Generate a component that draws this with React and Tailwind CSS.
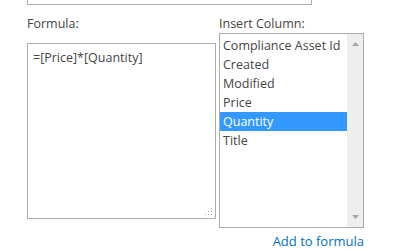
import React from 'react';

const columns = ['Compliance Asset Id', 'Created', 'Modified', 'Price', 'Quantity', 'Title'];

// little dotted resize grip, like the one on a textarea
const Grip = ({ className = '' }) => (
  <svg width="8" height="8" viewBox="0 0 8 8" className={className}>
    <g fill="#a8a8a8">
      <rect x="6" y="0" width="1" height="1" />
      <rect x="3" y="3" width="1" height="1" />
      <rect x="6" y="3" width="1" height="1" />
      <rect x="0" y="6" width="1" height="1" />
      <rect x="3" y="6" width="1" height="1" />
      <rect x="6" y="6" width="1" height="1" />
    </g>
  </svg>
);

const ScrollArrow = ({ down = false }) => (
  <svg width="7" height="4" viewBox="0 0 7 4">
    <path d={down ? 'M0 0H7L3.5 4Z' : 'M0 4H7L3.5 0Z'} fill="#a6a6a6" />
  </svg>
);

export default function App() {
  const selected = 'Quantity';

  return (
    <div
      className="w-[417px] h-[251px] bg-white text-[#444444] text-[12.5px] leading-[19px] overflow-hidden"
      style={{ fontFamily: '"Open Sans", "Noto Sans", sans-serif' }}
    >
      {/* bottom of the box above, cut off by the crop */}
      <div className="relative ml-[27px] w-[285px] h-[5px] border-x border-b border-[#ababab]">
        <Grip className="absolute right-[2px] bottom-[1px] h-[2px] overflow-hidden" />
      </div>

      <div className="flex ml-[27px] mt-[9px]">
        <div className="w-[189px]">
          <div>Formula:</div>
          <div className="relative mt-[10px] h-[176px] border border-[#ababab] px-[5px] pt-[4px]">
            =[Price]*[Quantity]
            <Grip className="absolute right-[2px] bottom-[2px]" />
          </div>
        </div>

        <div className="ml-[3px] w-[145px]">
          <div>Insert Column:</div>
          <div className="flex h-[195px] border border-[#ababab]">
            <ul className="flex-1 pt-[2px]">
              {columns.map((c) => (
                <li
                  key={c}
                  className={
                    c === selected
                      ? 'h-[19px] pl-[3px] bg-[#3399ff] text-white whitespace-nowrap'
                      : 'h-[19px] pl-[3px] whitespace-nowrap'
                  }
                >
                  {c}
                </li>
              ))}
            </ul>
            <div className="w-[16px] bg-[#eeeeee] flex flex-col items-center justify-between py-[8px]">
              <ScrollArrow />
              <ScrollArrow down />
            </div>
          </div>
          <div className="flex justify-end mt-[4px]">
            <a href="#" className="text-[#0072c6] text-[13px]">
              Add to formula
            </a>
          </div>
        </div>
      </div>
    </div>
  );
}
